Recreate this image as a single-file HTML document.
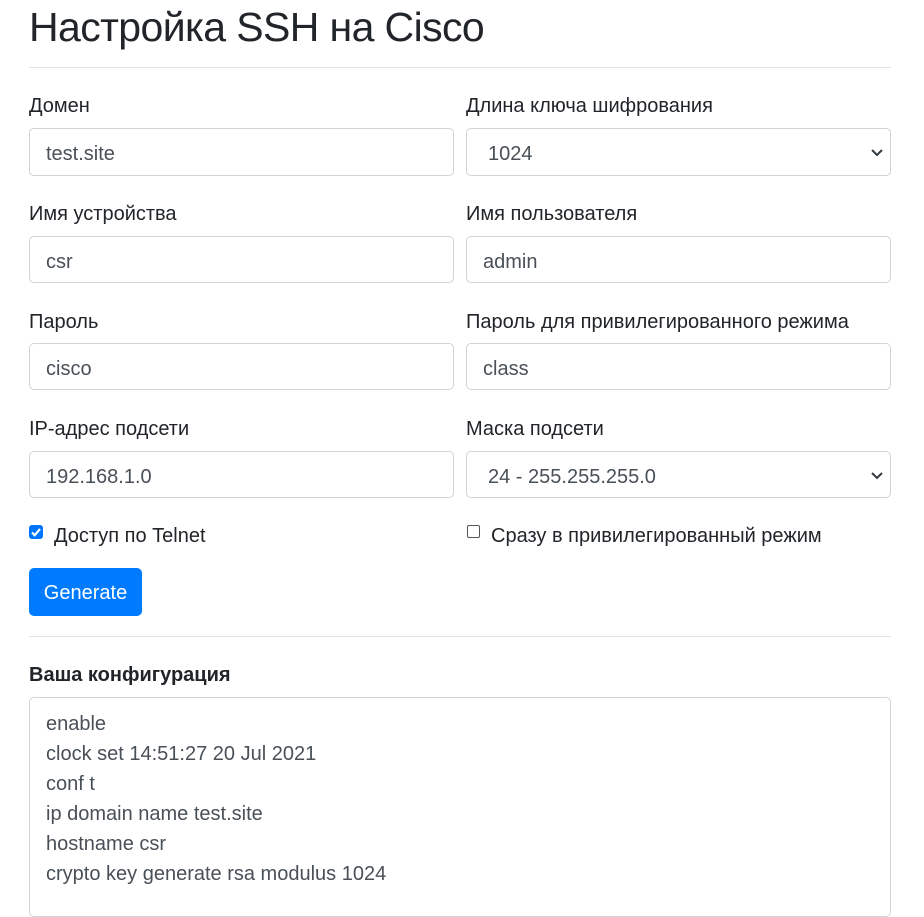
<!DOCTYPE html>
<html><head><meta charset="utf-8"><style>
*{box-sizing:border-box;margin:0;padding:0}
body{width:924px;height:891px;overflow:hidden;background:#fff;font-family:"Liberation Sans",sans-serif;color:#212529;position:relative}
.a{position:absolute}
h1{position:absolute;left:29px;top:3px;font-size:41px;font-weight:500;line-height:48px;white-space:nowrap;letter-spacing:-0.6px}
.hr{position:absolute;left:29px;width:862px;height:1px;background:#e2e4e7}
.lb{position:absolute;font-size:20px;line-height:24px;white-space:nowrap}
.in{position:absolute;width:425px;height:48px;border:1px solid #ced4da;border-radius:5px;font-size:20px;line-height:50px;padding-left:16px;color:#495057;background:#fff}
.sel{padding-left:21px}
.sel svg{position:absolute;right:6px;top:17px}
.cb{position:absolute;width:14px;height:14px;border-radius:3px}
.ta{position:absolute;left:29px;top:697px;width:862px;height:220px;border:1px solid #ced4da;border-radius:5px;padding:11px 16px;font-size:20px;line-height:30px;color:#495057}
</style></head><body>
<h1>Настройка SSH на Cisco</h1>
<div class="hr" style="top:67px"></div>

<div class="lb" style="left:29px;top:94px">Домен</div>
<div class="lb" style="left:466px;top:94px">Длина ключа шифрования</div>
<div class="in" style="left:29px;top:128px">test.site</div>
<div class="in sel" style="left:466px;top:128px">1024<svg width="14" height="14" viewBox="0 0 14 14"><path d="M2 4l5 5 5-5" fill="none" stroke="#343a40" stroke-width="2"/></svg></div>

<div class="lb" style="left:29px;top:202px">Имя устройства</div>
<div class="lb" style="left:466px;top:202px">Имя пользователя</div>
<div class="in" style="left:29px;top:236px;height:47px">csr</div>
<div class="in" style="left:466px;top:236px;height:47px">admin</div>

<div class="lb" style="left:29px;top:310px">Пароль</div>
<div class="lb" style="left:466px;top:310px">Пароль для привилегированного режима</div>
<div class="in" style="left:29px;top:343px;height:47px">cisco</div>
<div class="in" style="left:466px;top:343px;height:47px">class</div>

<div class="lb" style="left:29px;top:417px">IP-адрес подсети</div>
<div class="lb" style="left:466px;top:417px">Маска подсети</div>
<div class="in" style="left:29px;top:451px;height:47px">192.168.1.0</div>
<div class="in sel" style="left:466px;top:451px;height:47px">24 - 255.255.255.0<svg width="14" height="14" viewBox="0 0 14 14"><path d="M2 4l5 5 5-5" fill="none" stroke="#343a40" stroke-width="2"/></svg></div>

<div class="cb" style="left:29px;top:525px;background:#0075ff"><svg width="14" height="14" viewBox="0 0 14 14"><path d="M3 7.5l2.7 2.7L11 4" fill="none" stroke="#fff" stroke-width="2.2"/></svg></div>
<div class="lb" style="left:54px;top:524px">Доступ по Telnet</div>
<div class="cb" style="left:467px;top:525px;border:1px solid #555;width:13px;height:13px;border-radius:2px"></div>
<div class="lb" style="left:491px;top:524px">Сразу в привилегированный режим</div>

<div class="a" style="left:29px;top:568px;width:113px;height:48px;background:#007bff;border-radius:5px;color:#fff;font-size:20px;line-height:50px;text-align:center">Generate</div>

<div class="hr" style="top:636px"></div>
<div class="lb" style="left:29px;top:663px;font-weight:bold">Ваша конфигурация</div>
<div class="ta">enable<br>clock set 14:51:27 20 Jul 2021<br>conf t<br>ip domain name test.site<br>hostname csr<br>crypto key generate rsa modulus 1024</div>
</body></html>
